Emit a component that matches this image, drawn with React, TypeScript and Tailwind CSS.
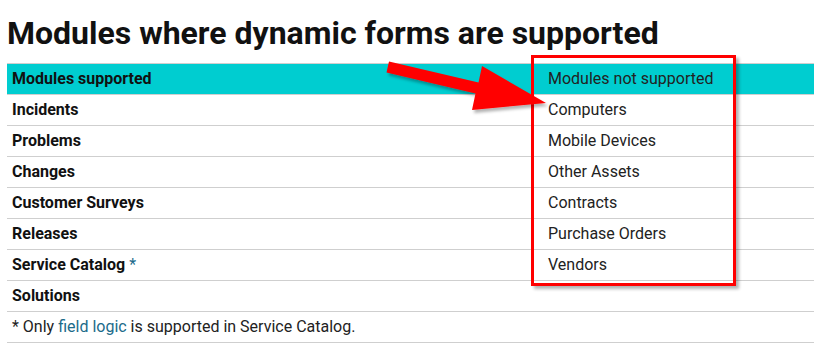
const supported = ['Incidents', 'Problems', 'Changes', 'Customer Surveys', 'Releases', 'Service Catalog', 'Solutions'];
const notSupported = ['Computers', 'Mobile Devices', 'Other Assets', 'Contracts', 'Purchase Orders', 'Vendors', ''];

// ── Arrow callout ──────────────────────────────────────────────────
function Arrow() {
  return (
    <svg className="absolute left-0 top-0 pointer-events-none" width="814" height="350" viewBox="0 0 814 350">
      <defs>
        <filter id="sh" x="-10%" y="-10%" width="130%" height="140%">
          <feDropShadow dx="2" dy="3" stdDeviation="1.5" floodColor="#000" floodOpacity="0.3" />
        </filter>
      </defs>
      <polygon
        points="389,61.5 478.5,82.5 482,66 546,103 472,110 475.5,93.5 386.5,72.5"
        fill="#ff0000"
        filter="url(#sh)"
      />
    </svg>
  );
}

export default function App() {
  return (
    <div className="relative w-[814px] h-[350px] bg-white overflow-hidden font-['Roboto',sans-serif] text-[#222]">
      <div className="pl-[7px] pt-[13px]">
        <h1 className="text-[32px] leading-[40px] font-bold text-[#111]">
          Modules where dynamic forms are supported
        </h1>
        <table className="mt-[10px] w-[807px] border-collapse text-[16px]">
          <thead>
            <tr className="bg-[#00cdd0] border-y border-[#cfcfcf] h-[31px]">
              <th className="w-[536px] text-left font-bold text-[#111] px-[5px]">Modules supported</th>
              <th className="text-left font-normal px-[5px]">Modules not supported</th>
            </tr>
          </thead>
          <tbody>
            {supported.map((m, i) => (
              <tr key={m} className="border-b border-[#cfcfcf] h-[31px]">
                <td className="px-[5px] font-bold text-[#111]">
                  {m}
                  {m === 'Service Catalog' && <span className="font-normal text-[#1b6b8a]"> *</span>}
                </td>
                <td className="px-[5px]">{notSupported[i]}</td>
              </tr>
            ))}
            <tr className="border-b border-[#cfcfcf] h-[31px]">
              <td colSpan={2} className="px-[5px]">
                * Only <span className="text-[#1b6b8a]">field logic</span> is supported in Service Catalog.
              </td>
            </tr>
          </tbody>
        </table>
      </div>

      {/* red highlight box */}
      <div className="absolute left-[531px] top-[55px] w-[205px] h-[231px] border-[3px] border-[#ff0000] shadow-[3px_3px_3px_rgba(0,0,0,0.3)]" />
      <Arrow />
    </div>
  );
}
